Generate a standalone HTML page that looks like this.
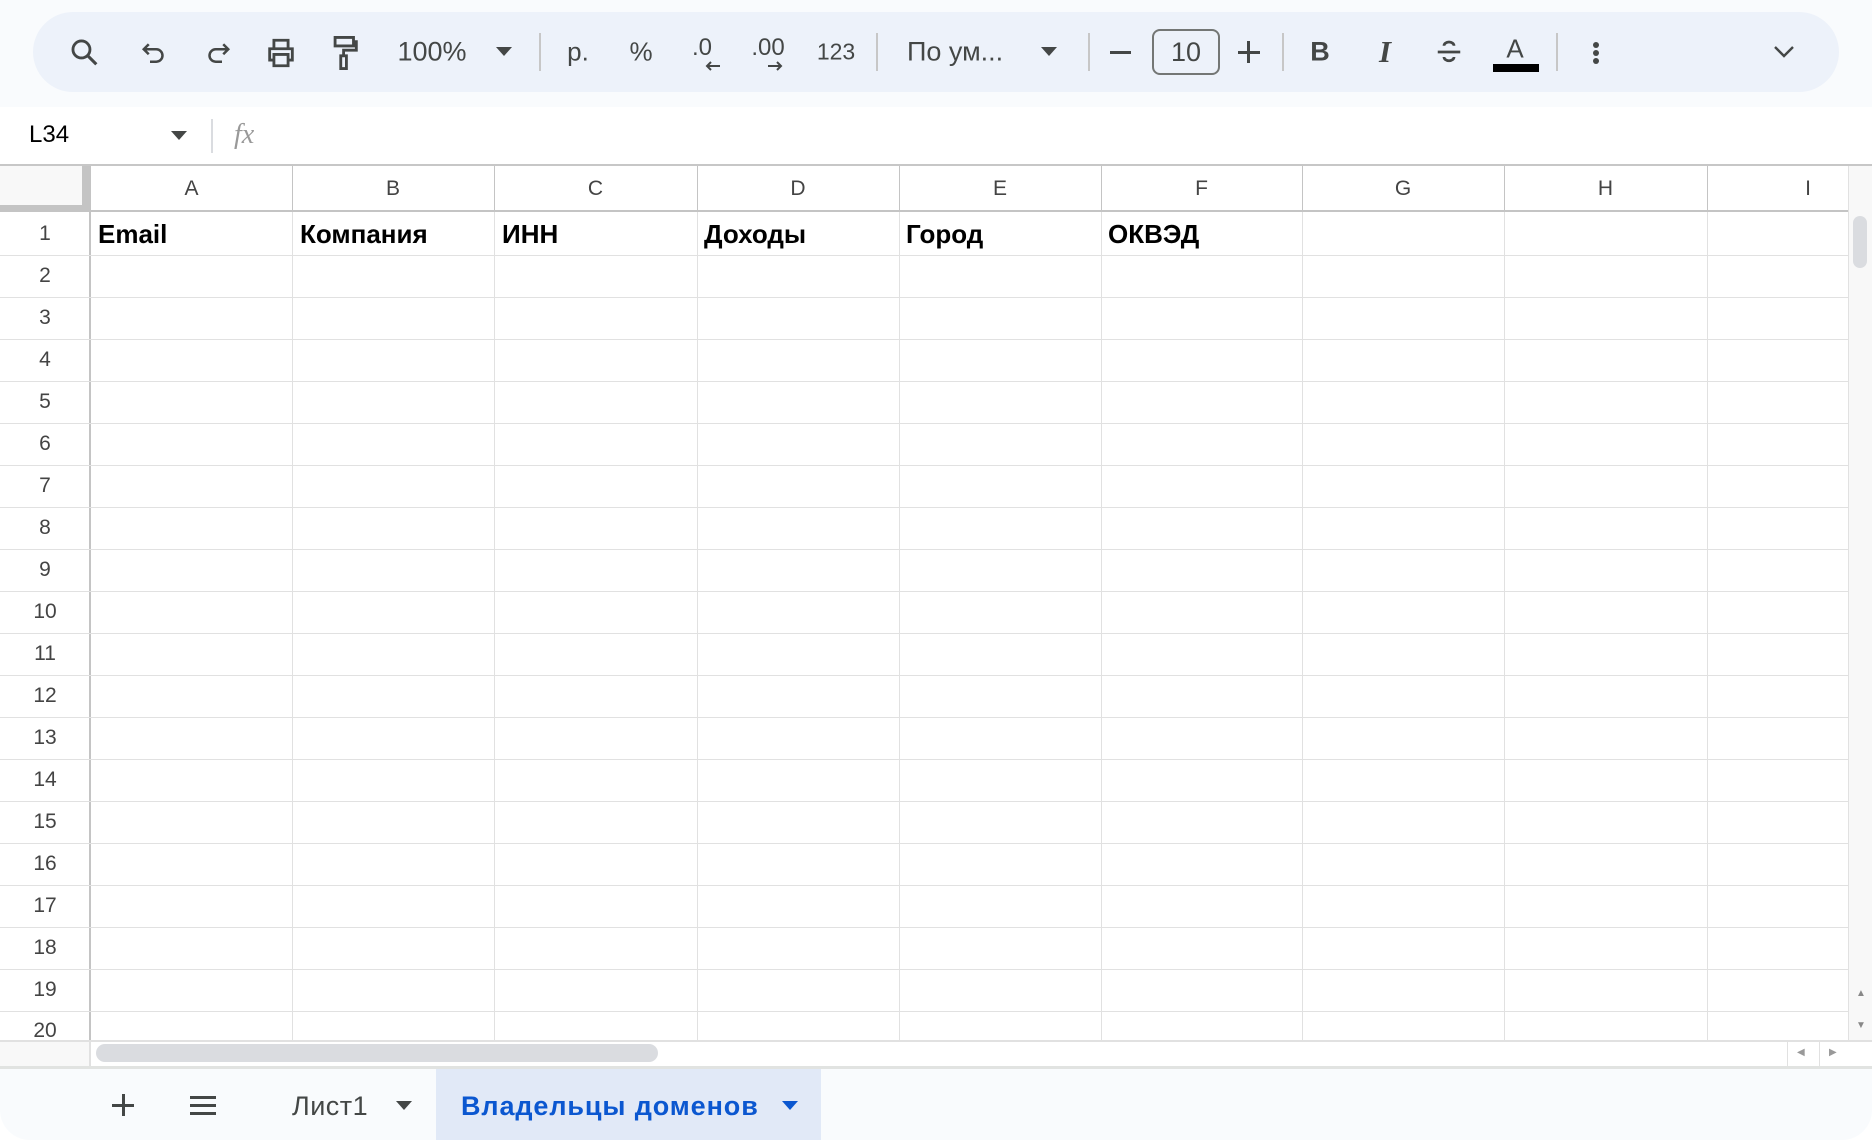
<!DOCTYPE html>
<html><head><meta charset="utf-8"><style>
*{margin:0;padding:0;box-sizing:border-box}
body{width:1872px;height:1140px;overflow:hidden;background:#fff;font-family:"Liberation Sans",Arial,sans-serif;position:relative;color:#444746}
.a{position:absolute}
.tb{left:0;top:0;width:1872px;height:107px;background:#f9fbfd}
.pill{left:33px;top:12px;width:1806px;height:80px;border-radius:40px;background:#edf2fa}
.t{position:absolute;top:52px;transform:translate(-50%,-50%);font-size:26px;color:#444746;white-space:nowrap}
.sep{position:absolute;top:33px;width:2px;height:38px;background:#c7c7c7}
.vl{position:absolute;width:1px;background:#e1e1e1;top:212px;height:828px}
.ch{position:absolute;top:165px;height:47px;line-height:47px;text-align:center;font-size:21px;color:#444}
.rn{position:absolute;left:0;width:90px;height:42px;line-height:42px;text-align:center;font-size:21px;color:#444}
.c1{position:absolute;top:212px;height:43px;line-height:45px;font-size:26px;font-weight:bold;color:#000}
</style></head><body>
<div class="a tb"></div>
<div class="a pill"></div>
<svg class="a" style="left:68px;top:36px" width="34" height="34" viewBox="0 0 24 24"><circle cx="9.5" cy="9.5" r="6" fill="none" stroke="#444746" stroke-width="2"/><path d="M14 14l6 6" stroke="#444746" stroke-width="2.2"/></svg>
<svg class="a" style="left:140px;top:38px" width="30" height="30" viewBox="0 0 24 24"><path d="M7 5L3 9l4 4M3 9h10a5 5 0 010 10H8" fill="none" stroke="#444746" stroke-width="2"/></svg>
<svg class="a" style="left:202px;top:38px" width="30" height="30" viewBox="0 0 24 24"><path d="M17 5l4 4-4 4M21 9H11a5 5 0 000 10h5" fill="none" stroke="#444746" stroke-width="2"/></svg>
<svg class="a" style="left:264px;top:36px" width="34" height="34" viewBox="0 0 24 24"><path d="M7 8V3h10v5M7 17H4v-8h16v8h-3M7 13h10v8H7z" fill="none" stroke="#444746" stroke-width="2"/></svg>
<svg class="a" style="left:328px;top:34px" width="34" height="38" viewBox="0 0 24 26"><path d="M5 2h13v6H5zM18 5h2v6h-9v4M9 15h4v9H9z" fill="none" stroke="#444746" stroke-width="2"/></svg>
<div class="t" style="left:432px;font-size:27px">100%</div>
<svg class="a" style="left:496px;top:47px" width="16" height="10"><path d="M0 0h16L8 9z" fill="#444746"/></svg>
<div class="sep" style="left:539px"></div>
<div class="t" style="left:578px">р.</div>
<div class="t" style="left:641px">%</div>
<div class="t" style="left:702px;font-size:24px;top:48px">.0</div>
<svg class="a" style="left:704px;top:60px" width="18" height="12"><path d="M16 6H3M7 2L3 6l4 4" fill="none" stroke="#444746" stroke-width="2"/></svg>
<div class="t" style="left:768px;font-size:24px;top:48px">.00</div>
<svg class="a" style="left:766px;top:60px" width="18" height="12"><path d="M2 6h13M11 2l4 4-4 4" fill="none" stroke="#444746" stroke-width="2"/></svg>
<div class="t" style="left:836px;font-size:23px">123</div>
<div class="sep" style="left:876px"></div>
<div class="t" style="left:907px;transform:translate(0,-50%);font-size:27px">По ум...</div>
<svg class="a" style="left:1041px;top:47px" width="16" height="10"><path d="M0 0h16L8 9z" fill="#444746"/></svg>
<div class="sep" style="left:1088px"></div>
<div class="a" style="left:1110px;top:51px;width:21px;height:3px;background:#444746"></div>
<div class="a" style="left:1152px;top:29px;width:68px;height:46px;border:2px solid #747775;border-radius:8px;font-size:27px;text-align:center;line-height:42px;color:#444746">10</div>
<div class="a" style="left:1238px;top:51px;width:22px;height:3px;background:#444746"></div>
<div class="a" style="left:1247px;top:41px;width:3px;height:22px;background:#444746"></div>
<div class="sep" style="left:1282px"></div>
<div class="t" style="left:1320px;font-weight:bold;font-size:27px">B</div>
<div class="t" style="left:1385px;font-style:italic;font-family:'Liberation Serif',serif;font-weight:bold;font-size:31px">I</div>
<svg class="a" style="left:1434px;top:37px" width="30" height="30" viewBox="0 0 24 24"><path d="M3 12h18M8 7a4 3 0 018 0M8 16a4 3 0 008 0" fill="none" stroke="#444746" stroke-width="2.2"/></svg>
<div class="t" style="left:1515px;top:49px;font-size:26px">A</div>
<div class="a" style="left:1493px;top:64px;width:46px;height:8px;background:#000"></div>
<div class="sep" style="left:1556px"></div>
<div class="a" style="left:1593px;top:42px;width:6px;height:6px;border-radius:3px;background:#444746;box-shadow:0 8px 0 #444746,0 16px 0 #444746"></div>
<svg class="a" style="left:1772px;top:44px" width="24" height="16"><path d="M3 3l9 9 9-9" fill="none" stroke="#444746" stroke-width="2.4"/></svg>

<div class="a" style="left:29px;top:135px;transform:translateY(-50%);font-size:24px;color:#000">L34</div>
<svg class="a" style="left:171px;top:131px" width="16" height="10"><path d="M0 0h16L8 9z" fill="#444746"/></svg>
<div class="a" style="left:211px;top:119px;width:2px;height:34px;background:#dadce0"></div>
<div class="a" style="left:234px;top:119px;font-family:'Liberation Serif',serif;font-style:italic;font-size:28px;color:#999">fx</div>

<div class="a" style="left:0;top:164px;width:1872px;height:2px;background:#c7c7c7"></div>
<div class="a" style="left:0;top:166px;width:82px;height:39px;background:#f8f8f8"></div>
<div class="a" style="left:82px;top:166px;width:9px;height:46px;background:#c4c4c4"></div>
<div class="a" style="left:0;top:205px;width:91px;height:7px;background:#c4c4c4"></div>
<div class="a" style="left:91px;top:210px;width:1757px;height:2px;background:#c4c4c4"></div>
<div class="a" style="left:89px;top:212px;width:2px;height:828px;background:#c4c4c4"></div>
<div class="a" style="left:1848px;top:166px;width:24px;height:874px;background:#f8f8f8;border-left:1px solid #e1e1e1"></div>
<div class="a" style="left:1853px;top:216px;width:14px;height:52px;border-radius:7px;background:#dadce0"></div>
<div class="a" style="left:1856px;top:988px;font-size:10px;color:#888">▲</div>
<div class="a" style="left:1856px;top:1020px;font-size:10px;color:#888">▼</div>

<div class="a" style="left:292px;top:166px;width:1px;height:44px;background:#c4c4c4"></div>
<div class="a" style="left:494px;top:166px;width:1px;height:44px;background:#c4c4c4"></div>
<div class="a" style="left:697px;top:166px;width:1px;height:44px;background:#c4c4c4"></div>
<div class="a" style="left:899px;top:166px;width:1px;height:44px;background:#c4c4c4"></div>
<div class="a" style="left:1101px;top:166px;width:1px;height:44px;background:#c4c4c4"></div>
<div class="a" style="left:1302px;top:166px;width:1px;height:44px;background:#c4c4c4"></div>
<div class="a" style="left:1504px;top:166px;width:1px;height:44px;background:#c4c4c4"></div>
<div class="a" style="left:1707px;top:166px;width:1px;height:44px;background:#c4c4c4"></div>
<div class="ch" style="left:91px;width:201px">A</div>
<div class="ch" style="left:292px;width:202px">B</div>
<div class="ch" style="left:494px;width:203px">C</div>
<div class="ch" style="left:697px;width:202px">D</div>
<div class="ch" style="left:899px;width:202px">E</div>
<div class="ch" style="left:1101px;width:201px">F</div>
<div class="ch" style="left:1302px;width:202px">G</div>
<div class="ch" style="left:1504px;width:203px">H</div>
<div class="ch" style="left:1707px;width:202px">I</div>

<div class="vl" style="left:292px"></div><div class="vl" style="left:494px"></div><div class="vl" style="left:697px"></div><div class="vl" style="left:899px"></div><div class="vl" style="left:1101px"></div><div class="vl" style="left:1302px"></div><div class="vl" style="left:1504px"></div><div class="vl" style="left:1707px"></div>

<div class="a" style="left:0;top:255px;width:1848px;height:785px;background:repeating-linear-gradient(to bottom,#e1e1e1 0,#e1e1e1 1px,transparent 1px,transparent 42px)"></div>

<div class="c1" style="left:98px">Email</div>
<div class="c1" style="left:300px">Компания</div>
<div class="c1" style="left:502px">ИНН</div>
<div class="c1" style="left:704px">Доходы</div>
<div class="c1" style="left:906px">Город</div>
<div class="c1" style="left:1108px">ОКВЭД</div>

<div class="rn" style="top:212px;height:43px;line-height:43px">1</div>
<div class="rn" style="top:255px">2</div><div class="rn" style="top:297px">3</div><div class="rn" style="top:339px">4</div><div class="rn" style="top:381px">5</div><div class="rn" style="top:423px">6</div><div class="rn" style="top:465px">7</div><div class="rn" style="top:507px">8</div><div class="rn" style="top:549px">9</div><div class="rn" style="top:591px">10</div><div class="rn" style="top:633px">11</div><div class="rn" style="top:675px">12</div><div class="rn" style="top:717px">13</div><div class="rn" style="top:759px">14</div><div class="rn" style="top:801px">15</div><div class="rn" style="top:843px">16</div><div class="rn" style="top:885px">17</div><div class="rn" style="top:927px">18</div><div class="rn" style="top:969px">19</div><div class="rn" style="top:1011px;height:29px;overflow:hidden;line-height:40px">20</div>

<div class="a" style="left:0;top:1040px;width:1872px;height:27px;background:#fff;border-top:2px solid #e1e1e1"></div>
<div class="a" style="left:0;top:1042px;width:91px;height:25px;background:#f8f8f8;border-right:2px solid #e1e1e1"></div>
<div class="a" style="left:96px;top:1044px;width:562px;height:18px;border-radius:9px;background:#dadce0"></div>
<div class="a" style="left:1787px;top:1042px;width:1px;height:25px;background:#e1e1e1"></div>
<div class="a" style="left:1819px;top:1042px;width:1px;height:25px;background:#e1e1e1"></div>
<div class="a" style="left:1797px;top:1047px;font-size:10px;color:#999">◀</div>
<div class="a" style="left:1829px;top:1047px;font-size:10px;color:#999">▶</div>

<div class="a" style="left:0;top:1066px;width:1872px;height:3px;background:#e1e3e1"></div>
<div class="a" style="left:0;top:1069px;width:1872px;height:71px;background:#f9fbfd;border-radius:0 0 30px 30px"></div>
<div class="a" style="left:436px;top:1069px;width:385px;height:71px;background:#e1e9f7"></div>
<div class="a" style="left:112px;top:1104px;width:22px;height:3px;background:#444746"></div>
<div class="a" style="left:122px;top:1094px;width:3px;height:22px;background:#444746"></div>
<div class="a" style="left:190px;top:1096px;width:26px;height:3px;background:#444746;box-shadow:0 8px 0 #444746,0 16px 0 #444746"></div>
<div class="a" style="left:292px;top:1091px;font-size:27px;color:#444746;letter-spacing:0.5px">Лист1</div>
<svg class="a" style="left:396px;top:1101px" width="16" height="10"><path d="M0 0h16L8 9z" fill="#444746"/></svg>
<div class="a" style="left:461px;top:1091px;font-size:27px;color:#0b57d0;font-weight:bold;letter-spacing:0.9px">Владельцы доменов</div>
<svg class="a" style="left:782px;top:1101px" width="16" height="10"><path d="M0 0h16L8 9z" fill="#0b57d0"/></svg>
</body></html>
